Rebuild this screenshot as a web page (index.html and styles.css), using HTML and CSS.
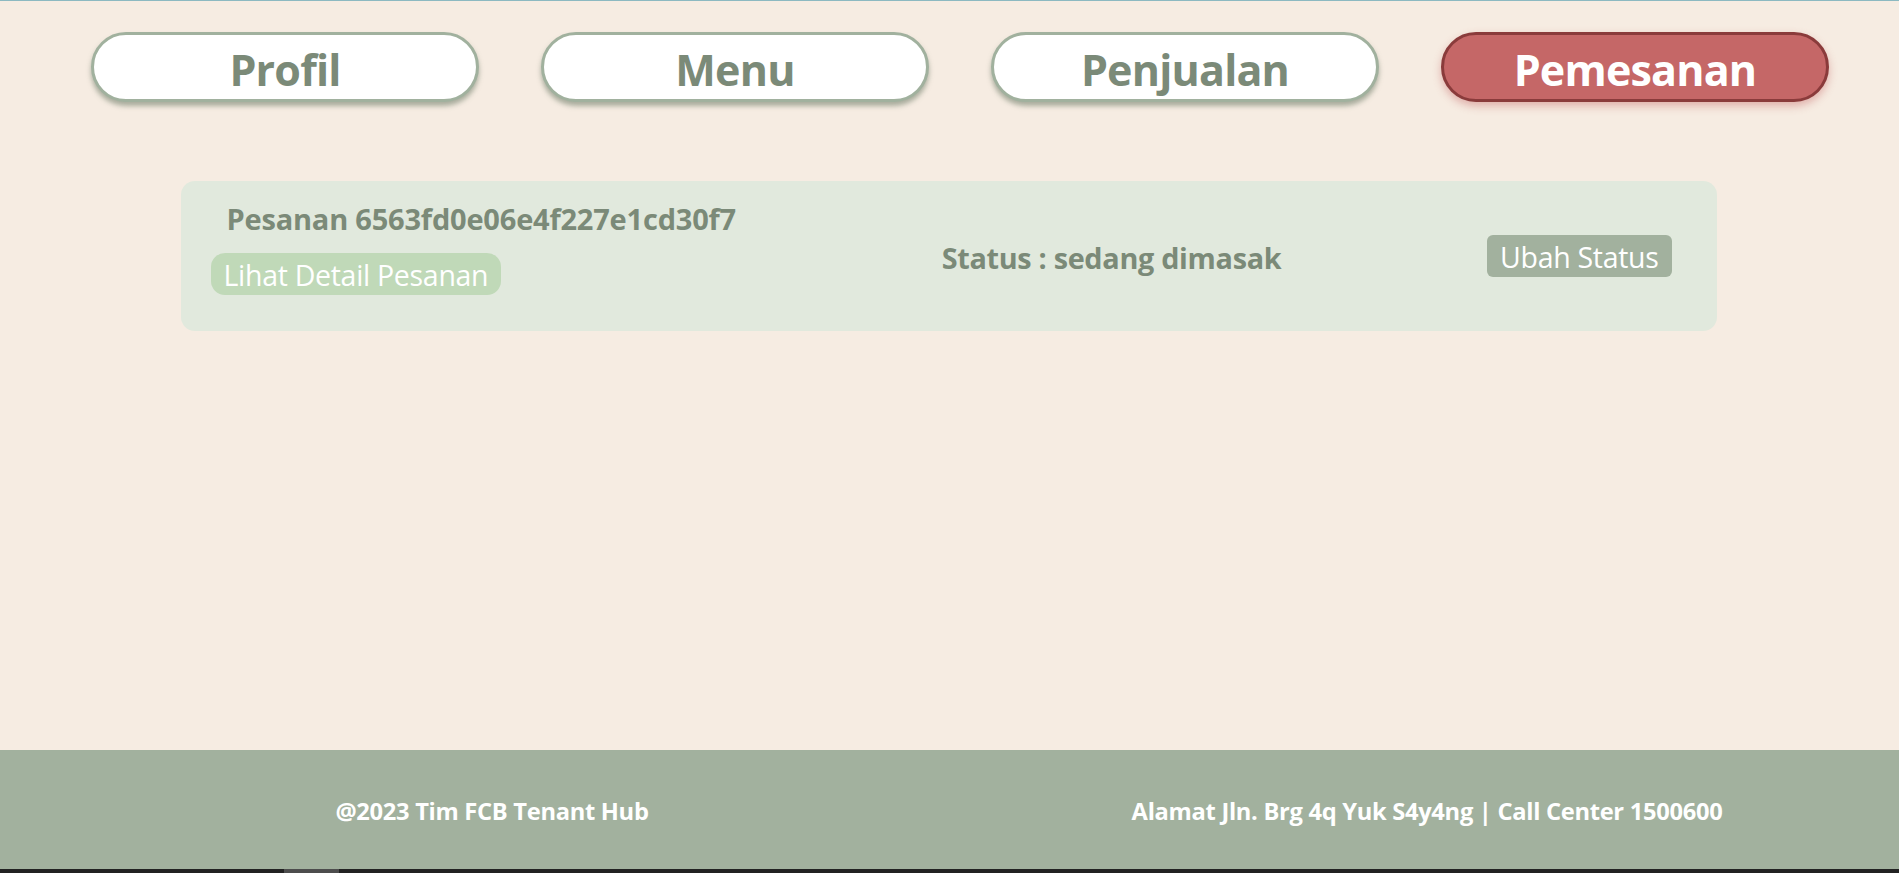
FILE: index.html
```html
<!DOCTYPE html>
<html lang="id">
<head>
<meta charset="utf-8">
<title>Pemesanan - FCB Tenant Hub</title>
<link rel="stylesheet" href="styles.css">
</head>
<body>
<div class="page">
  <nav class="nav">
    <a class="nav-btn" href="#">Profil</a>
    <a class="nav-btn" href="#">Menu</a>
    <a class="nav-btn" href="#">Penjualan</a>
    <a class="nav-btn nav-btn-active" href="#">Pemesanan</a>
  </nav>
  <main class="main">
    <div class="order-card">
      <div class="order-info">
        <h3 class="order-title">Pesanan 6563fd0e06e4f227e1cd30f7</h3>
        <button class="detail-btn">Lihat Detail Pesanan</button>
      </div>
      <div class="order-status">Status : sedang dimasak</div>
      <button class="status-btn">Ubah Status</button>
    </div>
  </main>
  <footer class="footer">
    <div class="footer-left">@2023 Tim FCB Tenant Hub</div>
    <div class="footer-right">Alamat Jln. Brg 4q Yuk S4y4ng | Call Center 1500600</div>
  </footer>
  <div class="hscroll"><div class="hscroll-thumb"></div></div>
</div>
</body>
</html>
```
FILE: styles.css
```css
* { box-sizing: border-box; }
html, body { margin: 0; padding: 0; }
body {
  font-family: "Open Sans", "Noto Sans", sans-serif;
  background: #f6ece2;
  color: #7b8a78;
}
.page {
  height: 873px;
  display: flex;
  flex-direction: column;
  border-top: 1px solid #8cb9c1;
  overflow: hidden;
}
.nav {
  display: flex;
  gap: 62px;
  padding: 31px 0 0 91px;
}
.nav-btn {
  width: 388px;
  height: 70px;
  display: flex;
  align-items: center;
  justify-content: center;
  background: #ffffff;
  border: 3px solid #a1b19e;
  border-radius: 35px;
  box-shadow: 0 4px 5px rgba(105, 120, 100, 0.55);
  color: #7b8a78;
  font-weight: 700;
  font-size: 43px;
  letter-spacing: -0.8px;
  text-decoration: none;
  padding-top: 5px;
}
.nav-btn-active {
  background: #c56767;
  border-color: #8a3b3b;
  color: #ffffff;
  box-shadow: 0 4px 8px rgba(197, 103, 103, 0.45);
}
.main {
  flex: 1;
  padding-top: 79px;
  display: flex;
  flex-direction: column;
  align-items: center;
}
.order-card {
  width: 1536px;
  height: 150px;
  margin-left: -2px;
  background: #e1e9dd;
  border-radius: 14px;
  display: flex;
  align-items: center;
  justify-content: space-between;
  padding: 0 45px 0 30px;
}
.order-info {
  align-self: flex-start;
  padding-top: 20px;
  display: flex;
  flex-direction: column;
  align-items: flex-start;
}
.order-title {
  margin: 0 0 16px 16px;
  font-size: 29px;
  line-height: 36px;
  font-weight: 700;
  color: #7b8a78;
  letter-spacing: -0.2px;
}
.detail-btn {
  font-family: inherit;
  height: 42px;
  border: none;
  border-radius: 14px;
  background: #c0d9b8;
  color: #ffffff;
  font-size: 28.5px;
  padding: 2px 13px 0;
  letter-spacing: -0.3px;
}
.order-status {
  font-size: 28.8px;
  font-weight: 700;
  color: #7b8a78;
  letter-spacing: -0.3px;
  padding-top: 2px;
}
.status-btn {
  font-family: inherit;
  height: 42px;
  border: none;
  border-radius: 6px;
  background: #a2b19e;
  color: #ffffff;
  font-size: 28.5px;
  padding: 1px 13px 0;
  letter-spacing: -0.3px;
}
.footer {
  height: 119px;
  flex: none;
  background: #a2b19e;
  color: #ffffff;
  font-weight: 700;
  font-size: 23.7px;
  display: grid;
  grid-template-columns: 984px 1fr;
  align-items: center;
  padding-right: 29px;
  padding-top: 2px;
  letter-spacing: -0.3px;
}
.footer-left, .footer-right { text-align: center; }
.hscroll {
  height: 4px;
  flex: none;
  background: #222222;
  position: relative;
}
.hscroll-thumb {
  position: absolute;
  left: 284px;
  top: 0;
  width: 55px;
  height: 4px;
  background: #4d4d4d;
}
```
